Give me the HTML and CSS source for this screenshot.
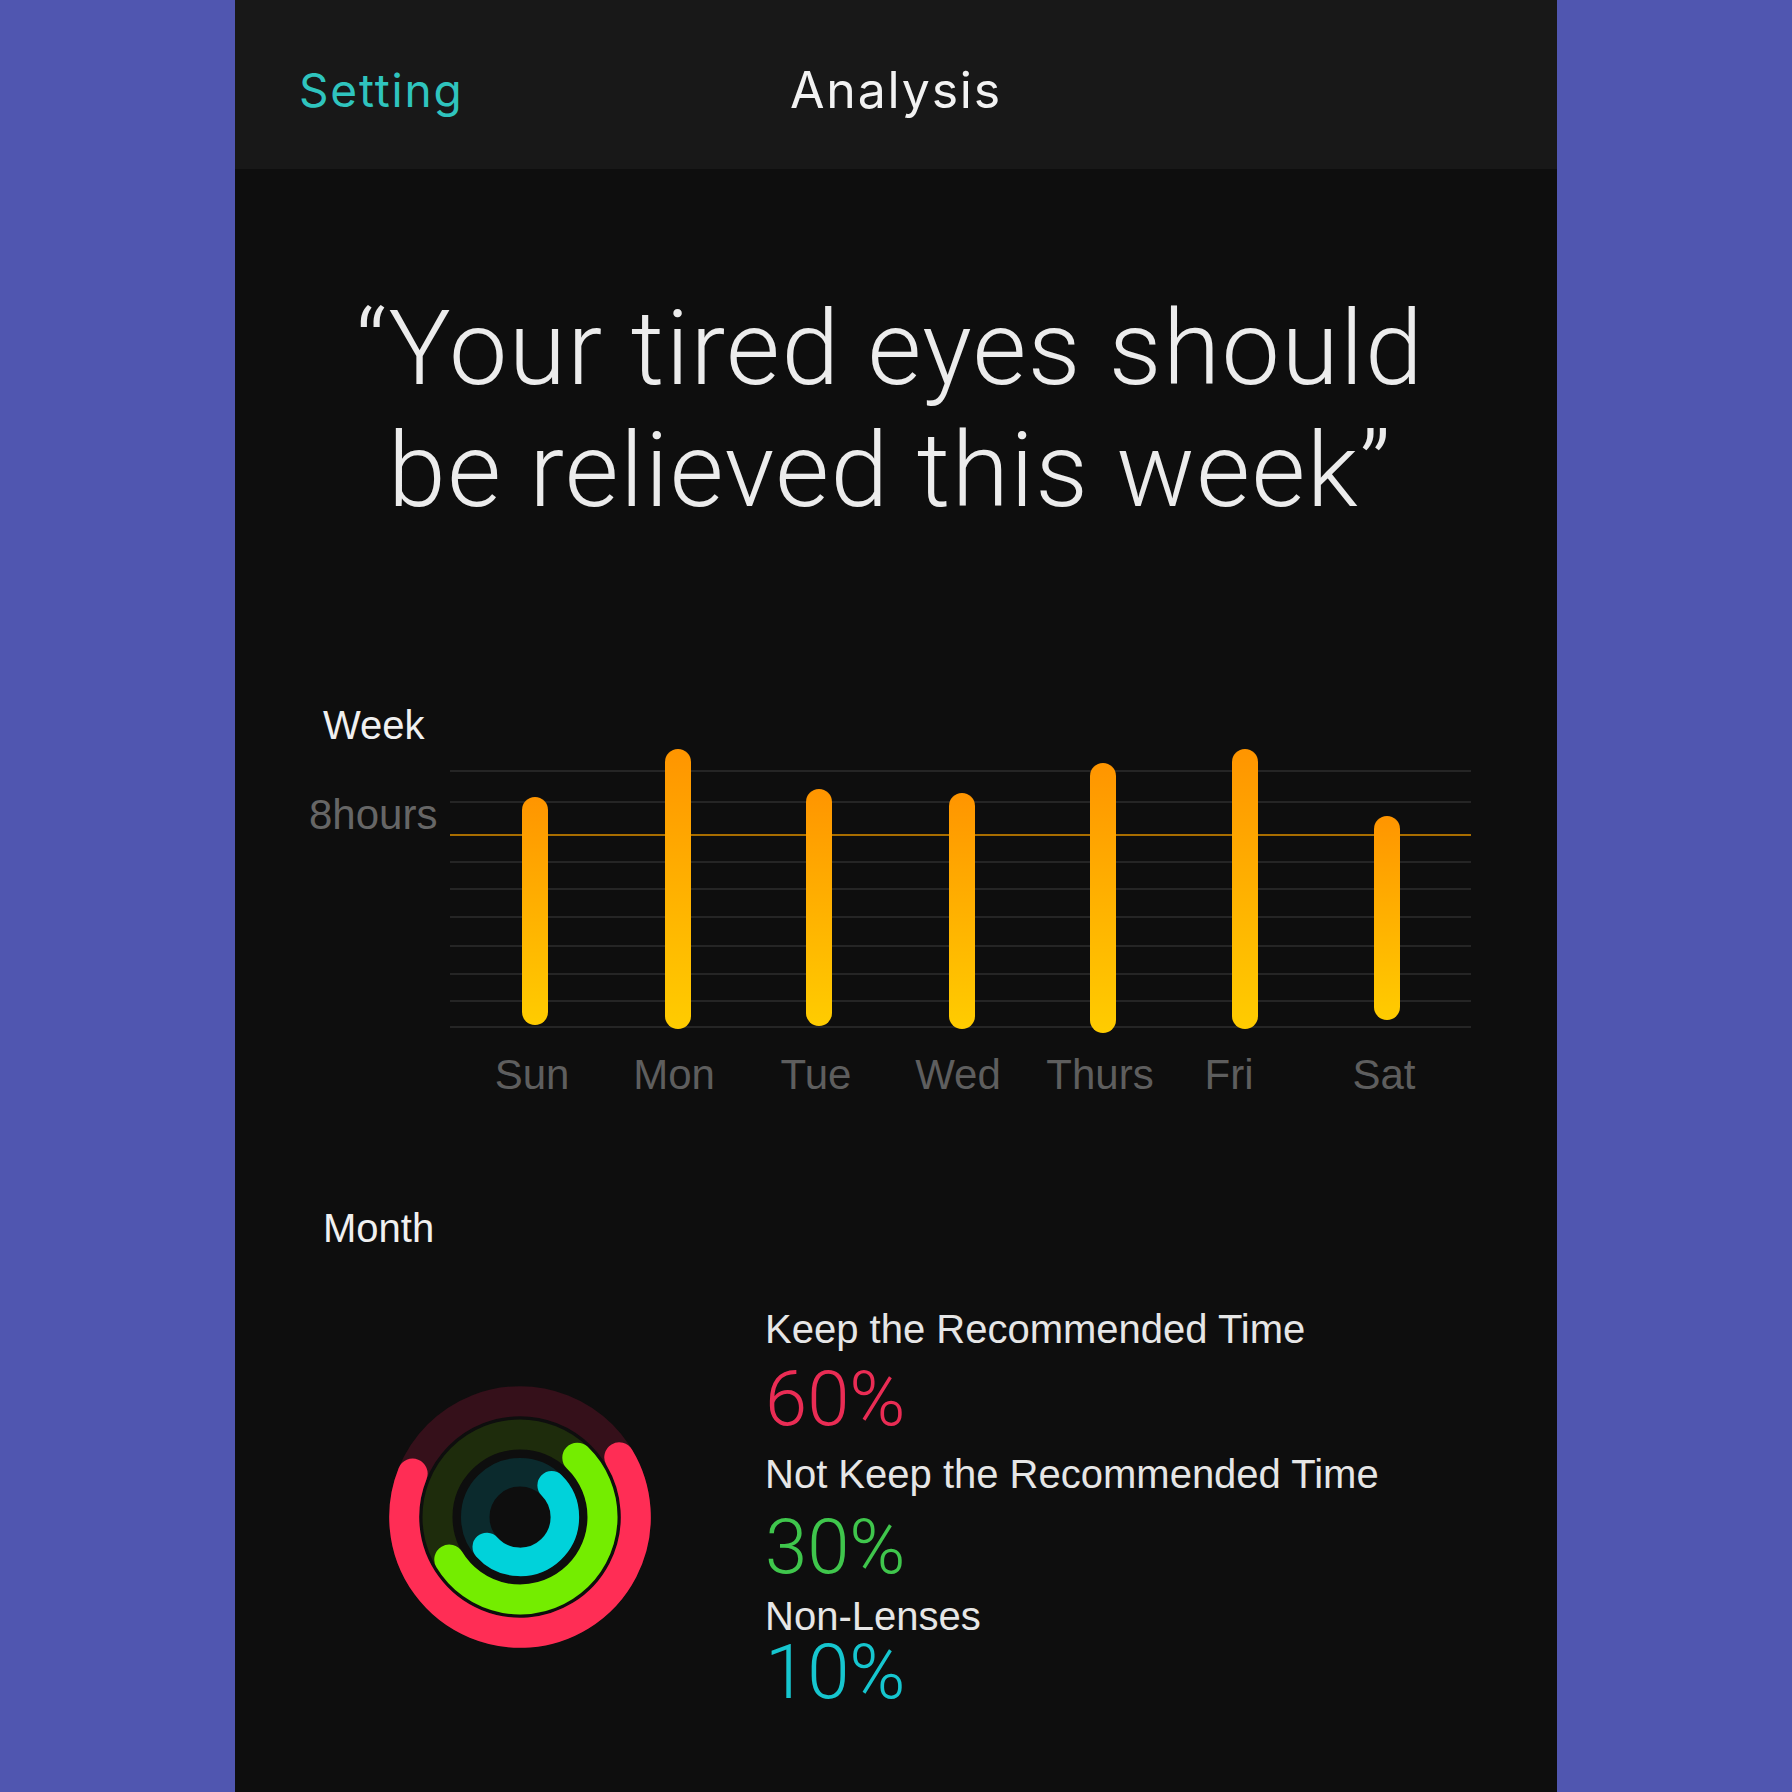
FILE: index.html
```html
<!DOCTYPE html>
<html lang="en">
<head>
  <meta charset="UTF-8">
  <title>Analysis</title>
  <meta name="viewport" content="width=device-width, initial-scale=1">
  <link rel="stylesheet" href="styles.css">
</head>
<body>
  <div class="phone">
    <!-- Navigation bar -->
    <header class="nav">
      <span class="nav-back">Setting</span>
      <h1 class="nav-title">Analysis</h1>
      <span></span>
    </header>

    <main class="content">
      <p class="quote">“Your tired eyes should<br>be relieved this week”</p>

      <!-- Week chart -->
      <section class="week">
        <h2 class="section-label">Week</h2>
        <div class="chart">
          <div class="axis">8hours</div>
          <svg class="bars" width="1021" height="290" viewBox="0 0 1021 290">
            <defs>
              <linearGradient id="barFill" x1="0" y1="0" x2="0" y2="1">
                <stop offset="0" stop-color="#ff9500"/>
                <stop offset="1" stop-color="#ffcc00"/>
              </linearGradient>
            </defs>
            <g class="grid">
              <line x1="0" x2="1021" y1="23" y2="23"/>
              <line x1="0" x2="1021" y1="54" y2="54"/>
              <line x1="0" x2="1021" y1="114" y2="114"/>
              <line x1="0" x2="1021" y1="141" y2="141"/>
              <line x1="0" x2="1021" y1="169" y2="169"/>
              <line x1="0" x2="1021" y1="198" y2="198"/>
              <line x1="0" x2="1021" y1="226" y2="226"/>
              <line x1="0" x2="1021" y1="253" y2="253"/>
              <line x1="0" x2="1021" y1="279" y2="279"/>
            </g>
            <line class="goal" x1="0" x2="1021" y1="87" y2="87"/>
            <g fill="url(#barFill)">
              <rect x="72" y="49" width="26" height="228" rx="13"/>
              <rect x="215" y="1" width="26" height="280" rx="13"/>
              <rect x="356" y="41" width="26" height="237" rx="13"/>
              <rect x="499" y="45" width="26" height="236" rx="13"/>
              <rect x="640" y="15" width="26" height="270" rx="13"/>
              <rect x="782" y="1" width="26" height="280" rx="13"/>
              <rect x="924" y="68" width="26" height="204" rx="13"/>
            </g>
          </svg>
        </div>
        <div class="days">
          <span>Sun</span>
          <span>Mon</span>
          <span>Tue</span>
          <span>Wed</span>
          <span>Thurs</span>
          <span class="day-fri">Fri</span>
          <span>Sat</span>
        </div>
      </section>

      <!-- Month summary -->
      <section class="month">
        <h2 class="section-label">Month</h2>
        <div class="month-body">
          <svg class="rings" width="262" height="262" viewBox="0 0 262 262" fill="none" stroke-linecap="round">
            <circle cx="131" cy="131" r="115.8" stroke="#35101a" stroke-width="30"/>
            <circle cx="131" cy="131" r="82.5" stroke="#1e2c0c" stroke-width="30"/>
            <circle cx="131" cy="131" r="44.75" stroke="#0b2a2d" stroke-width="28.5"/>
            <path d="M230.27 71.36 A115.8 115.8 0 1 1 23.63 87.62" stroke="#ff2d55" stroke-width="30"/>
            <path d="M188.31 71.66 A82.5 82.5 0 1 1 60.28 173.49" stroke="#74ed00" stroke-width="30"/>
            <path d="M162.64 99.36 A44.75 44.75 0 1 1 97.75 160.94" stroke="#00d2da" stroke-width="28.5"/>
          </svg>
          <div class="legend">
            <div class="legend-label">Keep the Recommended Time</div>
            <div class="legend-pct pct-red">60%</div>
            <div class="legend-label label-2">Not Keep the Recommended Time</div>
            <div class="legend-pct pct-green">30%</div>
            <div class="legend-label label-3">Non-Lenses</div>
            <div class="legend-pct pct-cyan">10%</div>
          </div>
        </div>
      </section>
    </main>
  </div>
</body>
</html>
```

FILE: styles.css
```css
/* ====== Page ====== */
body {
  margin: 0;
  background: #5056b0;
  font-family: "Liberation Sans", Arial, sans-serif;
}
.phone {
  width: 1322px;
  min-height: 1792px;
  margin-left: 235px;
  background: #0e0e0e;
  color: #e8e8e8;
}

/* ====== Nav bar ====== */
.nav {
  height: 169px;
  box-sizing: border-box;
  padding: 11px 64px 0;
  background: #181818;
  display: grid;
  grid-template-columns: 1fr auto 1fr;
  align-items: center;
  font-family: Inter, "Liberation Sans", sans-serif;
  font-size: 46px;
  line-height: 60px;
  letter-spacing: 1.8px;
}
.nav-back {
  color: #2fc4be;
}
.nav-title {
  margin: 0;
  font-size: 50px;
  font-weight: 400;
  color: #f2f2f2;
}

/* ====== Content ====== */
.content {
  padding: 0 86px 0 74px;
}
.quote {
  margin: 119px 0 0;
  font-family: Roboto, sans-serif;
  font-weight: 300;
  font-size: 104px;
  line-height: 122px;
  letter-spacing: 1.5px;
  text-align: center;
  color: #ececec;
}
.section-label {
  margin: 0 0 0 14px;
  font-size: 40px;
  line-height: 46px;
  font-weight: 400;
  color: #f0f0f0;
}

/* Week chart */
.week {
  margin-top: 170px;
}
.chart {
  display: flex;
}
.axis {
  width: 141px;
  margin-top: 43px;
  font-size: 42px;
  line-height: 48px;
  color: #666;
  white-space: nowrap;
}
.bars {
  display: block;
}
.grid line {
  stroke: #252525;
  stroke-width: 2;
}
.goal {
  stroke: #a86d00;
  stroke-width: 2;
}
.days {
  display: flex;
  margin-top: 13px;
  padding-left: 152px;
  font-size: 42px;
  line-height: 48px;
  color: #5e5e5e;
}
.days span {
  width: 142px;
  text-align: center;
}
.days .day-fri {
  box-sizing: border-box;
  padding-right: 26px;
}

/* Month summary */
.month {
  margin-top: 106px;
}
.month-body {
  display: flex;
  align-items: flex-start;
}
.rings {
  display: block;
  margin: 135px 0 0 80px;
}
.legend {
  margin: 58px 0 0 114px;
}
.legend-label {
  font-size: 40px;
  line-height: 40px;
  color: #e6e6e6;
  white-space: nowrap;
}
.legend-pct {
  margin-top: 16px;
  font-family: Roboto, sans-serif;
  font-weight: 300;
  font-size: 76px;
  line-height: 68px;
}
.label-2 { margin-top: 21px; }
.label-2 + .legend-pct { margin-top: 19px; }
.label-3 { margin-top: 15px; }
.label-3 + .legend-pct { margin-top: 2px; }
.pct-red { color: #ea2c54; }
.pct-green { color: #3fc64c; }
.pct-cyan { color: #16c6cf; }
```
